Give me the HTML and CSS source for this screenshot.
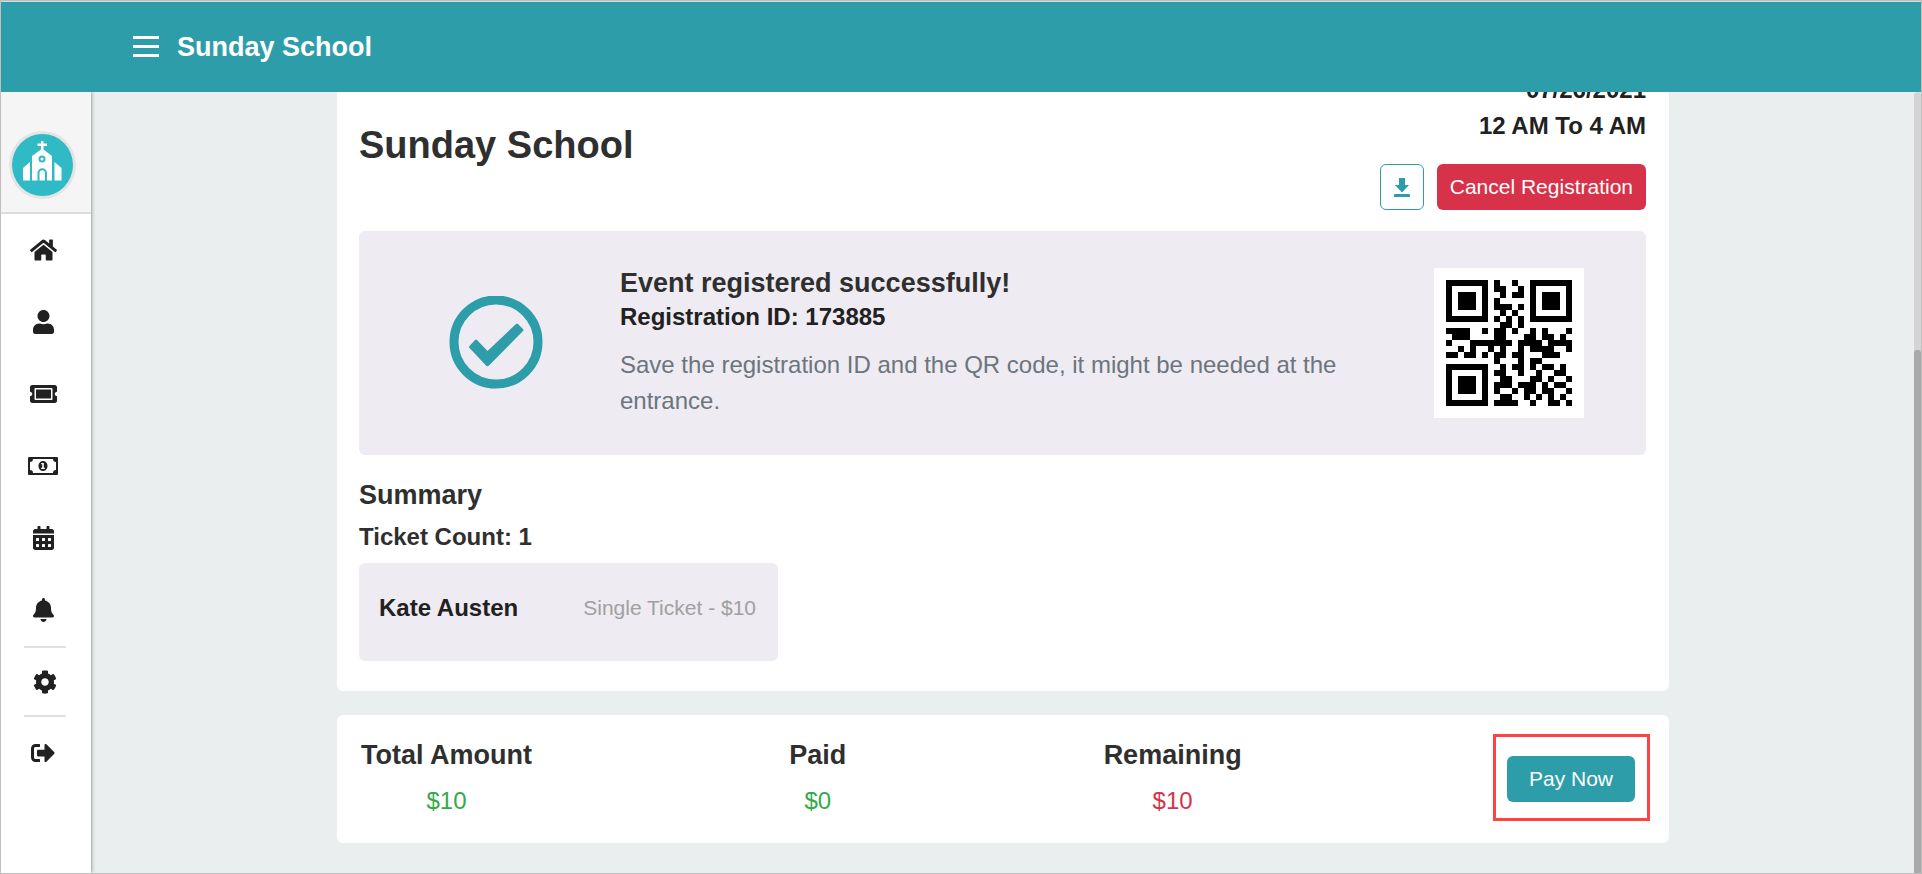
FILE: index.html
```html
<!DOCTYPE html>
<html lang="en">
<head>
    <meta charset="UTF-8">
    <meta name="viewport" content="width=device-width, initial-scale=1.0">
    <title>Sunday School</title>
    <link rel="stylesheet" href="styles.css">
</head>
<body>
    <header class="topbar">
        <button class="menu-button" aria-label="Menu"><span></span><span></span><span></span></button>
        <a class="brand" href="#">Sunday School</a>
    </header>
    <div class="layout">
        <aside class="sidebar">
            <div class="profile">
                <a class="avatar" href="#" aria-label="Church">
                    <svg viewBox="0 0 61 62" width="61" height="62">
                        <g fill="#fff">
                            <path d="M29 7h2.500v2.500h3.500v2.500h-3.500v3.500L40 22v24.500h-5V39a4.700 4.700 0 0 0-9.500 0v7.500h-5.500V22L29 15.500V12h-3.500V9.500H29z"/>
                            <path d="M18 28v18.500h-7V34zM42.500 28v18.500h7V34zM27.500 46.500V39a2.700 2.700 0 0 1 5.500 0v7.500z"/>
                        </g>
                        <circle cx="30" cy="25" r="2.500" fill="#fff" stroke="#30bac6" stroke-width="2"/>
                    </svg>
                </a>
            </div>
            <nav class="side-nav">
                <a href="#" aria-label="Home"><svg viewBox="0 0 576 512" width="27" height="24"><path d="M280.370 148.260L96 300.110V464a16 16 0 0 0 16 16l112.060-.29a16 16 0 0 0 15.920-16V368a16 16 0 0 1 16-16h64a16 16 0 0 1 16 16v95.640a16 16 0 0 0 16 16.050L464 480a16 16 0 0 0 16-16V300L295.670 148.260a12.190 12.190 0 0 0-15.300 0zM571.600 251.470L488 182.560V44.050a12 12 0 0 0-12-12h-56a12 12 0 0 0-12 12v72.610L318.470 43a48 48 0 0 0-61 0L4.340 251.470a12 12 0 0 0-1.600 16.900l25.500 31A12 12 0 0 0 45.150 301l235.220-193.740a12.190 12.190 0 0 1 15.300 0L530.900 301a12 12 0 0 0 16.900-1.600l25.500-31a12 12 0 0 0-1.700-16.930z"/></svg></a>
                <a href="#" aria-label="Members"><svg viewBox="0 0 448 512" width="21" height="24"><path d="M224 256c70.700 0 128-57.300 128-128S294.700 0 224 0 96 57.300 96 128s57.300 128 128 128zm89.600 32h-16.700c-22.200 10.200-46.900 16-72.900 16s-50.600-5.800-72.900-16h-16.700C60.200 288 0 348.200 0 422.400V464c0 26.500 21.500 48 48 48h352c26.500 0 48-21.500 48-48v-41.600c0-74.200-60.200-134.400-134.400-134.400z"/></svg></a>
                <a href="#" aria-label="Tickets"><svg viewBox="0 0 576 512" width="27" height="24"><path d="M128 160h320v192H128V160zm400 96c0 26.510 21.490 48 48 48v96c0 26.510-21.490 48-48 48H48c-26.510 0-48-21.490-48-48v-96c26.510 0 48-21.490 48-48s-21.490-48-48-48v-96c0-26.510 21.490-48 48-48h480c26.510 0 48 21.490 48 48v96c-26.510 0-48 21.490-48 48zm-48-104c0-13.255-10.745-24-24-24H120c-13.255 0-24 10.745-24 24v208c0 13.255 10.745 24 24 24h336c13.255 0 24-10.745 24-24V152z"/></svg></a>
                <a href="#" aria-label="Payments"><svg viewBox="0 0 30 24" width="30" height="24"><path fill-rule="evenodd" d="M1 3h28a1 1 0 0 1 1 1v16a1 1 0 0 1-1 1H1a1 1 0 0 1-1-1V4a1 1 0 0 1 1-1zM5 5a3 3 0 0 1-3 3v8a3 3 0 0 1 3 3h20a3 3 0 0 1 3-3V8a3 3 0 0 1-3-3zM15 7c2.600 0 4.500 2.200 4.500 5s-1.900 5-4.500 5-4.500-2.200-4.500-5 1.900-5 4.500-5zM13.200 9v1.300h1v3.400h-1V15h3.600v-1.300h-1V9z"/></svg></a>
                <a href="#" aria-label="Calendar"><svg viewBox="0 0 448 512" width="21" height="24"><path d="M0 464c0 26.500 21.500 48 48 48h352c26.500 0 48-21.500 48-48V192H0v272zm320-196c0-6.600 5.400-12 12-12h40c6.600 0 12 5.400 12 12v40c0 6.600-5.400 12-12 12h-40c-6.600 0-12-5.400-12-12v-40zm0 128c0-6.600 5.400-12 12-12h40c6.600 0 12 5.400 12 12v40c0 6.600-5.400 12-12 12h-40c-6.600 0-12-5.400-12-12v-40zM192 268c0-6.600 5.400-12 12-12h40c6.600 0 12 5.400 12 12v40c0 6.600-5.400 12-12 12h-40c-6.600 0-12-5.400-12-12v-40zm0 128c0-6.600 5.400-12 12-12h40c6.600 0 12 5.400 12 12v40c0 6.600-5.400 12-12 12h-40c-6.600 0-12-5.400-12-12v-40zM64 268c0-6.600 5.400-12 12-12h40c6.600 0 12 5.400 12 12v40c0 6.600-5.400 12-12 12H76c-6.600 0-12-5.400-12-12v-40zm0 128c0-6.600 5.400-12 12-12h40c6.600 0 12 5.400 12 12v40c0 6.600-5.400 12-12 12H76c-6.600 0-12-5.400-12-12v-40zM400 64h-48V16c0-8.800-7.200-16-16-16h-32c-8.800 0-16 7.200-16 16v48H160V16c0-8.800-7.200-16-16-16h-32c-8.800 0-16 7.200-16 16v48H48C21.500 64 0 85.500 0 112v48h448v-48c0-26.500-21.500-48-48-48z"/></svg></a>
                <a href="#" aria-label="Notifications"><svg viewBox="0 0 448 512" width="21" height="24"><path d="M224 512c35.320 0 63.970-28.650 63.970-64H160.030c0 35.350 28.650 64 63.970 64zm215.390-149.710c-19.320-20.760-55.470-51.990-55.470-154.290 0-77.700-54.480-139.900-127.940-155.160V32c0-17.670-14.320-32-31.980-32s-31.980 14.330-31.980 32v20.840C118.560 68.100 64.080 130.300 64.080 208c0 102.300-36.150 133.530-55.470 154.290-6 6.450-8.660 14.160-8.610 21.710.11 16.400 12.980 32 32.100 32h383.800c19.120 0 32-15.600 32.100-32 .05-7.550-2.610-15.270-8.610-21.710z"/></svg></a>
                <div class="settings">
                    <a href="#" aria-label="Settings"><svg viewBox="0 0 512 512" width="24" height="24"><path d="M487.400 315.700l-42.600-24.600c4.300-23.200 4.300-47 0-70.200l42.600-24.600c4.900-2.800 7.100-8.600 5.500-14-11.100-35.600-30-67.800-54.700-94.600-3.800-4.100-10-5.100-14.800-2.300L380.800 110c-17.900-15.400-38.500-27.300-60.800-35.100V25.800c0-5.600-3.900-10.500-9.400-11.700-36.700-8.200-74.300-7.800-109.200 0-5.500 1.200-9.400 6.100-9.400 11.700V75c-22.200 7.900-42.800 19.800-60.800 35.100L88.700 85.500c-4.900-2.800-11-1.900-14.800 2.300-24.700 26.700-43.600 58.900-54.700 94.600-1.700 5.400.6 11.200 5.500 14L67.300 221c-4.300 23.200-4.300 47 0 70.200l-42.600 24.600c-4.900 2.800-7.100 8.600-5.500 14 11.100 35.600 30 67.800 54.700 94.600 3.800 4.100 10 5.100 14.800 2.300l42.600-24.600c17.900 15.400 38.500 27.300 60.800 35.100v49.200c0 5.600 3.900 10.500 9.400 11.700 36.700 8.200 74.300 7.800 109.200 0 5.500-1.200 9.400-6.100 9.400-11.700v-49.200c22.200-7.900 42.800-19.800 60.800-35.100l42.600 24.600c4.900 2.800 11 1.900 14.800-2.300 24.700-26.700 43.600-58.900 54.700-94.600 1.500-5.500-.7-11.300-5.600-14.100zM256 336c-44.100 0-80-35.900-80-80s35.900-80 80-80 80 35.900 80 80-35.900 80-80 80z"/></svg></a>
                </div>
                <a href="#" aria-label="Log out"><svg viewBox="0 0 512 512" width="24" height="24"><path d="M497 273L329 441c-15 15-41 4.500-41-17v-96H152c-13.300 0-24-10.700-24-24v-96c0-13.300 10.700-24 24-24h136V88c0-21.400 25.900-32 41-17l168 168c9.300 9.400 9.300 24.600 0 34zM192 436v-40c0-6.600-5.400-12-12-12H96c-17.700 0-32-14.300-32-32V160c0-17.700 14.300-32 32-32h84c6.600 0 12-5.400 12-12V76c0-6.600-5.400-12-12-12H96c-53 0-96 43-96 96v192c0 53 43 96 96 96h84c6.600 0 12-5.400 12-12z"/></svg></a>
            </nav>
        </aside>
        <main class="content">
            <section class="card event-card">
                <div class="event-header">
                    <h1>Sunday School</h1>
                    <div class="event-info">
                        <p class="event-date">07/26/2021</p>
                        <p class="event-date">12 AM To 4 AM</p>
                        <div class="event-actions">
                            <button class="btn btn-outline" aria-label="Download">
                                <svg viewBox="0 0 16 19" width="16" height="19"><path d="M5 0h6v7h4L8 14.500 1 7h4zM1 16h14a1 1 0 0 1 1 1v2H0v-2a1 1 0 0 1 1-1z"/></svg>
                            </button>
                            <button class="btn btn-danger">Cancel Registration</button>
                        </div>
                    </div>
                </div>
                <div class="success-box">
                    <div class="success-icon">
                        <svg viewBox="0 0 94 94" width="94" height="94">
                            <circle cx="47" cy="46" r="42" fill="none" stroke="#2d9daa" stroke-width="9"/>
                            <path d="M67 28q1-1 2 0l5 5q1 1 0 2L40 69.500q-1.500 1.500-3 0L20.500 52q-1-1 0-2l5.500-6q1-1 2 0l10.500 11z" fill="#2d9daa"/>
                        </svg>
                    </div>
                    <div class="success-text">
                        <h2>Event registered successfully!</h2>
                        <p class="registration-id">Registration ID: 173885</p>
                        <p class="note">Save the registration ID and the QR code, it might be needed at the entrance.</p>
                    </div>
                    <svg class="qr-code" id="qr-code" viewBox="0 0 25 25" width="150" height="150" role="img" aria-label="QR code" shape-rendering="crispEdges"></svg>
                </div>
                <div class="summary">
                    <h2>Summary</h2>
                    <h3>Ticket Count: 1</h3>
                    <div class="ticket">
                        <span class="ticket-name">Kate Austen</span>
                        <span class="ticket-type">Single Ticket - $10</span>
                    </div>
                </div>
            </section>
            <section class="card payment-card">
                <div class="amount">
                    <h2>Total Amount</h2>
                    <p class="green">$10</p>
                </div>
                <div class="amount">
                    <h2>Paid</h2>
                    <p class="green">$0</p>
                </div>
                <div class="amount">
                    <h2>Remaining</h2>
                    <p class="red">$10</p>
                </div>
                <div class="pay">
                    <button class="btn btn-primary">Pay Now</button>
                </div>
            </section>
        </main>
        <div class="scrollbar"><div class="scrollbar-thumb"></div></div>
    </div>
    <script src="qr.js"></script>
</body>
</html>
```
FILE: styles.css
```css
* {
    box-sizing: border-box;
}
body {
    display: flex;
    flex-direction: column;
    height: 100vh;
    margin: 0;
    border: 1px solid #bfbfbf;
    overflow: hidden;
    background-color: #eaeeef;
    color: #212121;
    font-family: "Liberation Sans", Arial, sans-serif;
    font-size: 24px;
    line-height: 36px;
}
h1, h2, h3, p {
    margin: 0;
}
h1, h2, h3 {
    color: #2f2f2f;
}
h1 {
    margin-top: 8px;
    font-size: 38px;
    line-height: 46px;
}
h2 {
    font-size: 27px;
    line-height: 36px;
}
h3 {
    font-size: 24px;
    line-height: 36px;
}
.topbar {
    display: flex;
    align-items: center;
    gap: 18px;
    height: 91px;
    flex-shrink: 0;
    padding: 0 132px 1px;
    border-top: 1px solid #d5dcde;
    background-color: #2d9daa;
    z-index: 1;
}
.menu-button {
    display: flex;
    flex-direction: column;
    gap: 6px;
    width: 26px;
    padding: 0;
    border: none;
    background: none;
    cursor: pointer;
}
.menu-button span {
    height: 3px;
    background-color: white;
}
.brand {
    color: white;
    font-size: 27px;
    font-weight: bold;
    text-decoration: none;
}
.layout {
    display: flex;
    flex: 1;
    min-height: 0;
}
.sidebar {
    width: 90px;
    flex-shrink: 0;
    background-color: white;
    box-shadow: 0 0 4px rgba(0, 0, 0, 0.5);
}
.profile {
    padding: 39px 8px 13px;
    border-bottom: 2px solid #dcdcdc;
    background-color: #f5f5f5;
}
.avatar {
    display: block;
    width: 67px;
    height: 68px;
    border: 3px solid #e4e4e4;
    border-radius: 50%;
    background-color: #30bac6;
}
.avatar svg {
    display: block;
}
.side-nav {
    display: flex;
    flex-direction: column;
    align-items: center;
    padding-right: 6px;
}
.side-nav a {
    display: flex;
    align-items: center;
    justify-content: center;
    width: 42px;
    height: 72px;
    fill: #212121;
}
.settings {
    margin-left: 4px;
    border-top: 2px solid #dfdfdf;
    border-bottom: 2px solid #dfdfdf;
}
.side-nav .settings a {
    height: 67px;
}
.content {
    display: flex;
    flex: 1;
    flex-direction: column;
    justify-content: flex-end;
    gap: 24px;
    padding: 0 245px 30px 246px;
    overflow: hidden;
}
.card {
    flex-shrink: 0;
    border-radius: 6px;
    background-color: white;
}
.event-card {
    padding: 22px 23px 30px 22px;
}
.event-header {
    display: flex;
    justify-content: space-between;
    align-items: center;
    margin-bottom: 21px;
}
.event-info {
    text-align: right;
}
.event-date {
    font-weight: bold;
}
.event-actions {
    display: flex;
    justify-content: flex-end;
    gap: 13px;
    margin-top: 20px;
}
.btn {
    height: 46px;
    padding: 0 12px;
    border: 1px solid transparent;
    border-radius: 6px;
    color: white;
    font-family: inherit;
    font-size: 21px;
    cursor: pointer;
}
.btn svg {
    display: block;
}
.btn-outline {
    padding: 0 13px;
    border-color: #2d9daa;
    background-color: white;
    fill: #2d9daa;
}
.btn-danger {
    background-color: #d73249;
}
.btn-primary {
    padding: 0 21px;
    background-color: #2d9daa;
}
.success-box {
    display: grid;
    grid-template-columns: 261px 1fr 150px;
    align-items: center;
    height: 224px;
    padding-right: 62px;
    border-radius: 6px;
    background-color: #eeebf2;
}
.success-icon {
    padding-left: 90px;
}
.success-icon svg,
.qr-code {
    display: block;
}
.success-text {
    padding: 0 80px 2px 0;
}
.registration-id {
    font-weight: bold;
    line-height: 32px;
}
.note {
    margin-top: 14px;
    color: #6c757d;
}
.qr-code {
    background-color: white;
}
.summary {
    padding-top: 22px;
}
.summary h3 {
    margin: 6px 0 8px;
}
.ticket {
    display: flex;
    justify-content: space-between;
    max-width: 419px;
    height: 98px;
    padding: 27px 22px 0 20px;
    border-radius: 6px;
    background-color: #eeebf2;
}
.ticket-name {
    font-weight: bold;
}
.ticket-type {
    color: #a0a0a0;
    font-size: 21px;
}
.payment-card {
    display: flex;
    justify-content: space-between;
    padding: 22px 34px 24px 24px;
}
.amount {
    text-align: center;
}
.amount p {
    margin-top: 10px;
}
.green {
    color: #35a84c;
}
.red {
    color: #d73249;
}
.pay {
    position: relative;
    align-self: flex-start;
    margin: 19px 0 0 8px;
    line-height: 0;
}
/* highlight frame around the button */
.pay::before {
    content: "";
    position: absolute;
    inset: -22px -15px -19px -14px;
    border: 3px solid #ff4242;
    pointer-events: none;
}
.pay .btn {
    display: block;
}
.scrollbar {
    width: 7px;
    flex-shrink: 0;
    padding-top: 258px;
    border-radius: 4px 4px 0 0;
    background-color: #d5d3d4;
}
.scrollbar-thumb {
    height: 100%;
    border-radius: 3px 3px 0 0;
    background-color: #aaa8a8;
}
```
FILE: qr.js
```js
const modules = [
    '#######.#..#..#######',
    '#.....#.##..#.#.....#',
    '#.###.#..#.##.#.###.#',
    '#.###.#.#.....#.###.#',
    '#.###.#.###.#.#.###.#',
    '#.....#..#.#..#.....#',
    '#######.#.#.#.#######',
    '.........##.#........',
    '####..#.##.#..#.#...#',
    '.###....##...##.##.#.',
    '#...#######.####.####',
    '..#.#..#.#..#.####..#',
    '##.##.#.##.##...###..',
    '........#...#.##.....',
    '#######..#.##.#.##.#.',
    '#.....#.##..#..#..##.',
    '#.###.#..##...##.#..#',
    '#.###.#.###.###.#.##.',
    '#.###.#.#..#.##.##..#',
    '#.....#..##..#.#.#.#.',
    '#######.####..#..##.#'
];

let cells = '';
modules.forEach((row, y) => {
    [...row].forEach((cell, x) => {
        if (cell === '#') {
            cells += `<rect x="${x + 2}" y="${y + 2}" width="1" height="1"/>`;
        }
    });
});
document.getElementById('qr-code').innerHTML = cells;
```
